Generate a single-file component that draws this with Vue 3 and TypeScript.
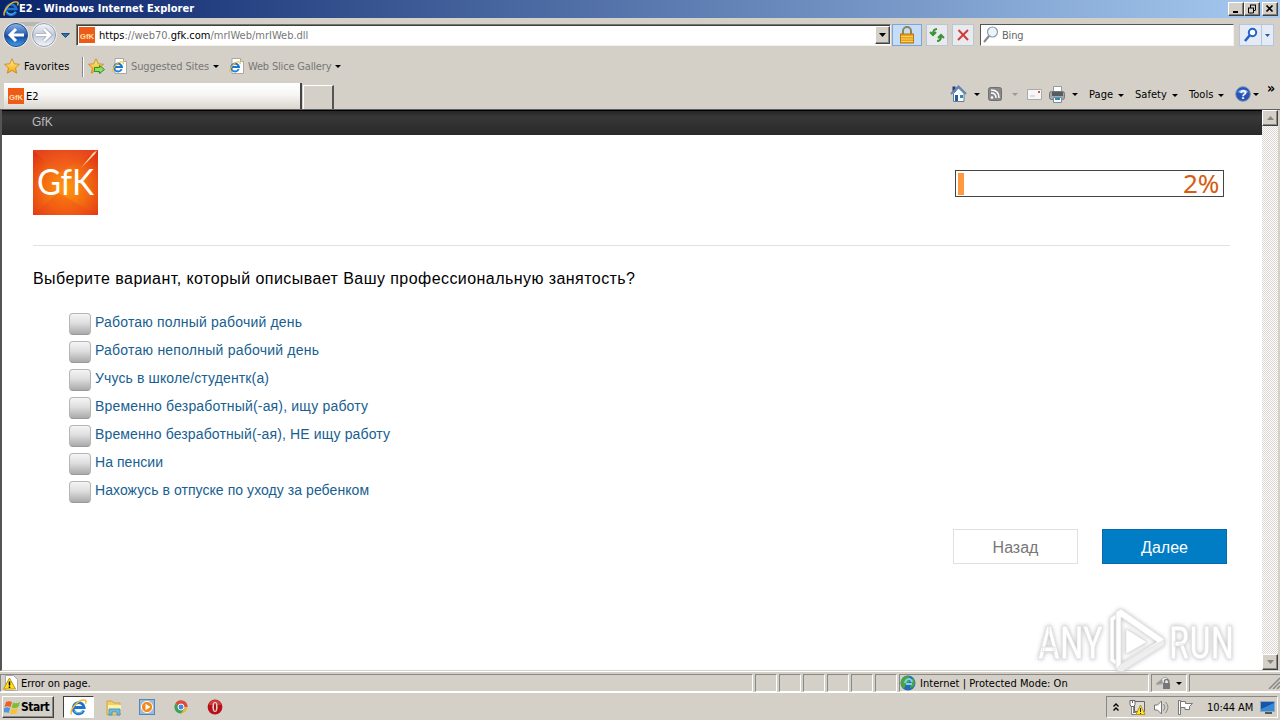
<script setup lang="ts">
const options: { label: string; width: number }[] = [
  { label: 'Работаю полный рабочий день', width: 207 },
  { label: 'Работаю неполный рабочий день', width: 224 },
  { label: 'Учусь в школе/студентк(а)', width: 174 },
  { label: 'Временно безработный(-ая), ищу работу', width: 273 },
  { label: 'Временно безработный(-ая), НЕ ищу работу', width: 295 },
  { label: 'На пенсии', width: 68 },
  { label: 'Нахожусь в отпуске по уходу за ребенком', width: 274 },
]
const menus: { label: string; width: number }[] = [
  { label: 'Page', width: 46 },
  { label: 'Safety', width: 54 },
  { label: 'Tools', width: 46 },
]
const progress = 2
</script>

<template>
  <div class="desktop">
    <svg class="defs" width="0" height="0">
      <defs>
        <radialGradient id="orange" cx=".5" cy=".58" r=".7">
          <stop offset="0" stop-color="#ff9a0c" /><stop offset=".5" stop-color="#f36a12" /><stop offset="1" stop-color="#df3215" />
        </radialGradient>
        <linearGradient id="blueBall" x1="0" y1="0" x2="0" y2="1">
          <stop offset="0" stop-color="#8db6e8" /><stop offset=".45" stop-color="#2f66b8" /><stop offset=".55" stop-color="#174a9c" /><stop offset="1" stop-color="#3fa0ee" />
        </linearGradient>
        <linearGradient id="greyBall" x1="0" y1="0" x2="0" y2="1">
          <stop offset="0" stop-color="#f5f7fb" /><stop offset=".5" stop-color="#c3cad9" /><stop offset="1" stop-color="#f3f6fb" />
        </linearGradient>
        <linearGradient id="gold" x1="0" y1="0" x2="0" y2="1">
          <stop offset="0" stop-color="#fff38a" /><stop offset="1" stop-color="#f3a516" />
        </linearGradient>
        <symbol id="ie" viewBox="0 0 16 16">
          <path d="M12.9 10.8A5.2 5.2 0 1 1 13.3 8H4.2" fill="none" stroke="#1d74cf" stroke-width="2.6" />
          <path d="M12.2 10.8A4.8 4.8 0 0 1 4 11" fill="none" stroke="#65bdf3" stroke-width="1" />
          <path d="M1.5 14.5C-.8 11 8-1 14.5 1.2c1 .5.7 2-.1 3.2" fill="none" stroke="#f0bd27" stroke-width="1.4" />
        </symbol>
        <symbol id="page-ie" viewBox="0 0 16 16">
          <path d="M3 .5h8.500l3 3v12H3z" fill="#fff" stroke="#aaa9a4" />
          <path d="M11.500.5v3h3" fill="#ddd" stroke="#aaa9a4" />
          <use href="#ie" x="0" y="3" width="12" height="12" />
        </symbol>
        <symbol id="star" viewBox="0 0 16 16">
          <path d="M8 .8l2.200 5 5.300.5-4 3.600 1.200 5.300L8 12.400l-4.700 2.800 1.200-5.300-4-3.600 5.300-.5z" fill="url(#gold)" stroke="#cf8a1d" stroke-width=".9" />
        </symbol>
      </defs>
    </svg>

    <header class="title-bar">
      <svg class="title-icon" width="16" height="16"><use href="#ie" width="16" height="16" /></svg>
      <span class="title">E2 - Windows Internet Explorer</span>
      <div class="window-buttons">
        <i class="win"><svg width="12" height="10"><path d="M3 8h5" stroke="#000" stroke-width="2" /></svg></i>
        <i class="win"><svg width="12" height="10"><path d="M4 1h6M4.500 1v3M9.500 1v5M9.500 6.500H8M2 4h6M2.500 4v5h5V4" fill="none" stroke="#000" /></svg></i>
        <i class="win close"><svg width="12" height="10"><path d="M2.500 1.500l6 6M8.500 1.500l-6 6" stroke="#000" stroke-width="1.700" /></svg></i>
      </div>
    </header>

    <section class="address-row">
      <svg class="nav" width="72" height="32">
        <path d="M15 3h28a14 14 0 0 1 10 4H6A14 14 0 0 1 15 3z" fill="#a7a7aa" opacity=".6" />
        <circle cx="15" cy="16" r="12.800" fill="#ececef" /><circle cx="15" cy="16" r="11.500" fill="url(#blueBall)" stroke="#284b83" />
        <circle cx="43" cy="16" r="12.800" fill="#eee" /><circle cx="43" cy="16" r="11.500" fill="url(#greyBall)" stroke="#969eb0" />
        <path d="M23 16H10M15 10l-6 6 6 6" fill="none" stroke="#fff" stroke-width="3" />
        <path d="M35 16h13M43 10l6 6-6 6" fill="none" stroke="#9aa2b4" stroke-width="4" />
        <path d="M35 16h13M43 10l6 6-6 6" fill="none" stroke="#fff" stroke-width="2.600" />
        <path d="M60.500 14.500h8l-4 4z" fill="#2878a5" stroke="#1d4e88" />
      </svg>
      <div class="address">
        <svg class="favicon" width="16" height="16"><rect width="16" height="16" fill="#ee5b18" /><text x="1" y="11.500" textLength="14" lengthAdjust="spacingAndGlyphs" class="tiny-logo">GfK</text></svg>
        <span class="url"><b>https</b>://web70.<b>gfk.com</b>/mrIWeb/mrIWeb.dll</span>
        <i class="drop"><svg width="7" height="4"><path d="M0 0h7L3.500 4z" /></svg></i>
      </div>
      <div class="tool lock"><svg width="18" height="20"><path d="M5 10V6a4 4 0 0 1 8 0v4" fill="none" stroke="#8d8458" stroke-width="2" /><rect x="2.500" y="9" width="13" height="9" fill="#e8a21b" stroke="#b67914" /><path d="M3 11.500h12M3 14h12M3 16.500h12" stroke="#ffd05a" /></svg></div>
      <div class="tool refresh"><svg width="16" height="16" fill="none" stroke="#399334" stroke-width="2"><path d="M8 2C5 2 4 4 4 7M1 5l3 3 3-3M8 14c3 0 4-2 4-5M9 11l3-3 3 3" /></svg></div>
      <div class="tool stop"><svg width="16" height="16"><path d="M3.500 3l9.500 10M13 3L3 13" stroke="#cf3e38" stroke-width="2" /></svg></div>
      <div class="search"><svg width="18" height="18"><circle cx="10.500" cy="6" r="5" fill="#eaf4fa" stroke="#8c9ba7" stroke-width="1.200" /><path d="M7 10l-5 6" stroke="#888" stroke-width="2" /></svg><span class="hint">Bing</span></div>
      <div class="go"><i><svg width="16" height="16"><circle cx="9.500" cy="5.500" r="3.700" fill="#fff" stroke="#2162c9" stroke-width="2" /><path d="M7 8l-5 6" stroke="#2162c9" stroke-width="2.600" /></svg></i><i class="go-drop"><svg width="5" height="3"><path d="M0 0h5L2.500 3z" fill="#235a9c" /></svg></i></div>
    </section>

    <section class="favorites">
      <svg width="17" height="17"><use href="#star" width="16" height="16" /></svg>
      <span class="fav-label">Favorites</span>
      <i class="divider"></i>
      <svg class="add-star" width="17" height="17"><use href="#star" width="16" height="16" /><path d="M6.500 9.500h5v-2l5 4-5 4v-2h-5z" fill="#8ee061" stroke="#2e912a" /></svg>
      <svg class="page-icon" width="16" height="17"><use href="#page-ie" width="16" height="16" /></svg>
      <span class="muted suggested">Suggested Sites</span><i class="arrow"></i>
      <svg class="page-icon second" width="16" height="17"><use href="#page-ie" width="16" height="16" /></svg>
      <span class="muted slices">Web Slice Gallery</span><i class="arrow"></i>
    </section>

    <section class="tab-row">
      <div class="tab"><svg class="favicon" width="16" height="16"><rect width="16" height="16" fill="#ee5b18" /><text x="1" y="11.500" textLength="14" lengthAdjust="spacingAndGlyphs" class="tiny-logo">GfK</text></svg><span>E2</span></div>
      <div class="new-tab"></div>
      <div class="commands">
        <svg class="home" width="18" height="18"><path d="M3.500 8.500v8h10.500v-8L8.500 3z" fill="#f5fbff" stroke="#637f9b" /><path d="M2.500 1.500h3v5h-3z" fill="#2b3480" /><path d="M1 9l7.500-7.500L16 9" fill="none" stroke="#6284ae" stroke-width="2" /><path d="M5 10h3v6H5z" fill="#2c5c96" /><path d="M10 10h3v3h-3z" fill="#3d86a6" /></svg>
        <i class="arrow home-arrow"></i>
        <svg class="rss" width="14" height="14"><rect x=".5" y=".5" width="13" height="13" rx="2" fill="#888" stroke="#707070" /><circle cx="4" cy="10.500" r="1.300" fill="#fff" /><path d="M3 6c3 0 5 2 5 5M3 3c5 0 8 3 8 8" fill="none" stroke="#fff" stroke-width="1.500" /></svg>
        <i class="arrow disabled"></i>
        <svg class="mail" width="15" height="11"><path d="M.5.5h14v10H.5z" fill="#f7f7f6" stroke="#aaa" /><path d="M3 7h5" stroke="#c1c1d0" /><path d="M11 2h2v2h-2z" fill="#cc5265" /></svg>
        <svg class="printer" width="17" height="17"><path d="M4.500.5h8v6h-8z" fill="#fff" stroke="#9a9a9a" /><rect x=".5" y="5.500" width="15" height="8" rx="2" fill="#a4a8ac" stroke="#777" /><path d="M3 6h11v4H3z" fill="#565c61" /><path d="M4.500 11.500h8v5h-8z" fill="#f8fcff" stroke="#798b9d" /><path d="M6 13h5" stroke="#288ac5" stroke-width="2" /></svg>
        <i class="arrow print-arrow"></i>
        <span v-for="menu in menus" :key="menu.label" class="menu" :style="{ width: menu.width + 'px' }">{{ menu.label }}<i class="arrow"></i></span>
        <svg class="help" width="16" height="16"><circle cx="8" cy="8" r="7.300" fill="#2853b4" stroke="#7a91ba" /><path d="M2.500 6a6 4 0 0 1 11 0q-5 3-11 0" fill="#7ca4e3" /><text x="4.500" y="12.500" class="question">?</text></svg>
        <i class="arrow"></i>
        <span class="more">»</span>
      </div>
    </section>

    <main class="viewport">
      <div class="document">
        <div class="site-bar"><span>GfK</span></div>
        <div class="brand-row">
          <svg width="65" height="65" class="logo">
            <rect width="65" height="65" fill="url(#orange)" />
            <path d="M0 0l25 23L65 0z" fill="#ef5427" opacity=".4" /><path d="M0 65l25-22 40 22z" fill="#ef3619" opacity=".25" />
            <path d="M64 .5L62 4 48 18l12-15z" fill="#ffd9a8" />
            <text x="4" y="45" textLength="57" lengthAdjust="spacingAndGlyphs" class="brand">GfK</text>
          </svg>
          <div class="progress"><i :style="{ width: progress * 3 + 'px' }"></i><span>{{ progress }}%</span></div>
        </div>
        <h1><svg width="620" height="24"><text x="0" y="17" textLength="602">Выберите вариант, который описывает Вашу профессиональную занятость?</text></svg></h1>
        <ul>
          <li v-for="option in options" :key="option.label"><i class="box"></i><svg width="310" height="24"><text x="0" y="14" :textLength="option.width">{{ option.label }}</text></svg></li>
        </ul>
        <div class="actions"><button class="back">Назад</button><button class="next">Далее</button></div>
        <svg class="watermark" width="212" height="76">
          <g class="mark">
            <text x="5" y="53" textLength="65" lengthAdjust="spacingAndGlyphs">ANY</text>
            <text x="136" y="53" textLength="65" lengthAdjust="spacingAndGlyphs">RUN</text>
            <path d="M77 12l6-4v5l-2 1v39l2 1v5l-6-4z" />
            <path fill-rule="evenodd" d="M88 3l43 30v6L88 66l-5-3V6zM88 11v47l36-22z" />
            <path d="M93 23l21 13-21 12z" />
            <path d="M88 58l43-24v5L88 66l-5-3z" class="shade" />
          </g>
        </svg>
      </div>
      <aside class="scrollbar"><i class="scroll-button"><svg width="7" height="4"><path d="M0 4h7L3.500 0z" fill="#87847e" /></svg></i><i class="scroll-button"><svg width="7" height="4"><path d="M0 0h7L3.500 4z" fill="#87847e" /></svg></i></aside>
    </main>

    <section class="status">
      <div class="cell error"><svg width="16" height="16"><path d="M2.500.5h8l4 4v11h-12z" fill="#fff" stroke="#aaa" /><path d="M6.500 3l6 11h-12z" fill="#ffe019" stroke="#b99015" /><path d="M6.500 6.500v4M6.500 11.500v1.500" stroke="#000" stroke-width="1.500" /></svg><span>Error on page.</span></div>
      <div v-for="n in 6" :key="n" class="cell mini"></div>
      <div class="cell zone"><svg width="16" height="16"><circle cx="8" cy="8" r="7.500" fill="#246cb7" /><path d="M2 4c2-4 7-4 8-2L8 4l2 3-4 2-2 5C0 11 0 6 2 4zM12 3c3 1 4 6 1 9l-3 1 1-5z" fill="#48a83e" /><path d="M5 8c1-5 6-5 7-1M6 9h6" stroke="#83cdf8" fill="none" stroke-width="2" /></svg><span>Internet | Protected Mode: On</span></div>
      <div class="cell security"><svg width="18" height="16"><path d="M1 9l7-6 3-1 4 4-3 5-4-3-4 2z" fill="#eee" stroke="#aaa" /><path d="M1 9l6-5 1 4-3 1z" fill="#999" /><rect x="8" y="8" width="7" height="6" fill="#777" /><path d="M9.500 8V6.500a2 2 0 0 1 4 0V8" fill="none" stroke="#777" stroke-width="1.300" /></svg><i class="arrow"></i></div>
      <div class="cell grip"><svg width="12" height="12"><path d="M1 12L12 1M5 12l7-7M9 12l3-3" stroke="#888" stroke-width="1.500" /></svg></div>
    </section>

    <footer class="taskbar">
      <div class="start"><svg width="17" height="17"><path d="M2 3c2-1 4-1 6 0L6.500 8c-2-1-4-1-6 0z" fill="#f05d24" /><path d="M9 3.500c2 1 4 1 7-.5L14.500 8c-3 1.500-5 1.500-7 .5z" fill="#80bf35" /><path d="M.2 9c2-1 4-1 6 0l-1.500 5c-2-1-4-1-6 0z" fill="#4b96df" /><path d="M7.200 9.500c2 1 4 1 7-.5l-1.500 5c-3 1.500-5 1.500-7 .5z" fill="#f8c13b" /></svg><b>Start</b></div>
      <div class="task-active"><svg width="17" height="17"><use href="#ie" width="17" height="17" /></svg></div>
      <svg class="explorer" width="17" height="17"><path d="M1 2h5l2 2h6v12H1z" fill="#f2cf69" stroke="#cda83e" /><path d="M2 6h13v8H2z" fill="#fff1a8" /><path d="M3 10h11v6h-3v-3H6v3H3z" fill="#70b8dd" stroke="#4f96ba" /></svg>
      <svg class="player" width="17" height="17"><rect x=".5" y=".5" width="15" height="15" fill="#9abbe0" stroke="#5685b9" /><circle cx="8" cy="8" r="5.600" fill="#f68816" stroke="#fff" /><path d="M6.500 4.800l5 3.200-5 3.200z" fill="#fff" /></svg>
      <svg class="chrome" width="14" height="14"><circle cx="7" cy="7" r="6.500" fill="#e5b945" /><path d="M7 7H13.500A6.500 6.500 0 0 0 1.200 4z" fill="#de4940" /><path d="M7 7L1.200 4A6.500 6.500 0 0 0 7 13.500L10 9z" fill="#37a35e" /><circle cx="7" cy="7" r="3" fill="#438add" stroke="#fff" /></svg>
      <svg class="opera" width="16" height="16"><circle cx="8" cy="8" r="7.400" fill="#b91018" /><path d="M2 6a6 5 0 0 1 12 0" fill="#e36b62" opacity=".5" /><ellipse cx="8" cy="8" rx="2.600" ry="5" fill="#e9d3cf" /><ellipse cx="8" cy="8" rx="1" ry="4" fill="#a80c13" /></svg>
      <div class="tray">
        <svg class="chevrons" width="6" height="9"><path d="M.5 3.500L3 1l2.500 2.500M.5 7.500L3 5l2.500 2.500" fill="none" stroke="#000" stroke-width="1.400" /></svg>
        <svg class="network" width="17" height="17"><path d="M5.500 2.500h10v10h-10z" fill="#ddd" stroke="#666" /><path d="M3.500 7v7.500h4" fill="none" stroke="#666" stroke-width="2.400" /><path d="M3.500 7v7.500h4" fill="none" stroke="#fff" /><path d="M1 1.500h5v4l-1 2H2l-1-2z" fill="#fff" stroke="#666" /><path d="M3.500 1v3" stroke="#666" /><path d="M11.500 6l4.500 9.500H7z" fill="#ffe42a" stroke="#b99611" /><path d="M11.500 9v4M11.500 14v1" stroke="#222" /></svg>
        <svg class="volume" width="17" height="17"><path d="M1.500 6h3l4-4v13l-4-4h-3z" fill="#fff" stroke="#777" /><path d="M10.500 5q3 3 0 7M12.500 3q5 5 0 11" fill="none" stroke="#888" /></svg>
        <svg class="flag" width="17" height="17"><path d="M1.500 1.500h2v14h-2z" fill="#fff" stroke="#777" /><path d="M3.500 2.500h5v2h7l-3 3 0 3H8v-2H3.500z" fill="#fff" stroke="#777" /></svg>
        <span>10:44 AM</span>
        <svg class="screen" width="16" height="13"><path d="M.5.5h14v10H.5z" fill="#1853a7" stroke="#93a7bb" /><path d="M1 8L14 2v8H1z" fill="#328ad8" /><path d="M5 12h7" stroke="#555" stroke-width="2" /></svg>
      </div>
    </footer>
  </div>
</template>

<style>
body { margin: 0; overflow: hidden; }
</style>
<style scoped>
* { box-sizing: border-box; }
i { font-style: normal; }
svg { display: block; flex: none; }
.desktop { width: 1280px; height: 720px; overflow: hidden; background: #d4d0c8; display: flex; flex-direction: column; font: 11px/14px "DejaVu Sans", sans-serif; font-stretch: condensed; color: #000; white-space: nowrap; }
.defs { position: absolute; }
.title-bar { height: 18px; flex: none; display: flex; align-items: center; padding: 0 2px 0 3px; background: linear-gradient(90deg, #0a246a, #a6caf0); color: #fff; }
.title { font-weight: bold; font-size: 11px; letter-spacing: .03px; }
.window-buttons { display: flex; margin-left: auto; }
.win { width: 16px; height: 14px; background: #d4d0c8; border: 1px solid; border-color: #fff #404040 #404040 #fff; box-shadow: inset -1px -1px #808080; overflow: hidden; padding: 1px; }
.close { margin-left: 2px; }
.address-row { height: 34px; flex: none; display: flex; align-items: center; padding-left: 1px; }
.nav { margin-right: 3px; }
.address { width: 815px; height: 22px; border: 1px solid; border-color: #77746f #f3f1ed #f3f1ed #77746f; box-shadow: inset 1px 1px #404040; background: #fff; display: flex; align-items: center; padding-left: 2px; }
.tiny-logo { font: bold 8px "Liberation Sans", sans-serif; fill: #ffe0aa; }
.url { margin-left: 4px; padding-top: 1px; color: #777; }
.url b { font-weight: normal; color: #000; }
.drop { width: 15px; height: 18px; margin-left: auto; background: #d4d0c8; border: 1px solid; border-color: #fff #404040 #404040 #fff; box-shadow: inset -1px -1px #888; display: grid; place-items: center; }
.tool { height: 22px; display: grid; place-items: center; border: 1px solid #b9c6d3; background: #e9eaed; }
.lock { width: 30px; margin-left: 1px; background: #c7dcf7; border-color: #7ba6dc; }
.refresh { width: 22px; margin-left: 4px; }
.stop { width: 22px; margin-left: 4px; }
.search { width: 254px; height: 22px; margin-left: 6px; background: #fff; border: 1px solid; border-color: #555 #f4f2ee #f4f2ee #555; display: flex; align-items: center; padding-left: 1px; }
.hint { color: #666; margin-left: 2px; padding-top: 2px; letter-spacing: -.2px; }
.go { display: flex; width: 35px; height: 22px; margin-left: 5px; border: 1px solid #b6c5dc; background: #e5ebf5; }
.go i { width: 21px; display: grid; place-items: center; }
.go .go-drop { width: 12px; border-left: 1px solid #b6c5dc; }
.favorites { height: 29px; flex: none; display: flex; align-items: center; padding-left: 4px; }
.fav-label { width: 55px; margin-left: 3px; letter-spacing: .1px; }
.divider { width: 2px; height: 20px; margin-left: 3px; border-left: 1px solid #888; border-right: 1px solid #fff; }
.add-star { margin-left: 4px; }
.page-icon { margin-left: 7px; }
.muted { color: #777; margin-left: 3px; padding-top: 1px; }
.suggested { width: 82px; letter-spacing: -.13px; }
.slices { width: 87px; margin-left: 3px; letter-spacing: -.18px; }
.arrow { display: inline-block; width: 0; height: 0; border: 3px solid transparent; border-top-color: #000; border-bottom: 0; flex: none; }
.second { margin-left: 10px; }
.tab-row { height: 28px; flex: none; display: flex; align-items: flex-end; padding-left: 4px; }
.tab { width: 298px; height: 26px; background: linear-gradient(#fff, #f7f6f4 45%, #d9d5ce); border-right: 2px solid #444; display: flex; align-items: center; padding-left: 4px; }
.tab span { margin-left: 2px; padding-top: 1px; }
.new-tab { width: 31px; height: 24px; border: solid #fff; border-width: 1px 0 0 1px; border-right: 2px solid #555; margin-left: 1px; }
.commands { display: flex; align-items: center; height: 28px; margin-left: 616px; padding-bottom: 2px; }
.home-arrow { margin-left: 6px; }
.rss { margin-left: 8px; }
.disabled { margin-left: 10px; border-top-color: #999; }
.mail { margin-left: 9px; }
.printer { margin-left: 7px; }
.print-arrow { margin: 0 11px 0 6px; }
.menu { display: flex; align-items: center; justify-content: space-between; padding-top: 2px; letter-spacing: .05px; }
.menu .arrow { margin-right: 11px; }
.help + .arrow { margin-left: 2px; }
.question { font: bold 12px "Liberation Sans", sans-serif; fill: #fff; }
.more { font-size: 14px; font-weight: bold; margin: -13px 0 0 8px; }
.viewport { height: 562px; flex: none; display: flex; border-left: 2px solid #555; border-top: 1px solid #606060; border-bottom: 1px solid #d4d0c8; }
.document { width: 1260px; position: relative; background: #fff; font-family: "Liberation Sans", sans-serif; font-stretch: normal; }
.site-bar { height: 25px; background: linear-gradient(#262626, #373737 25%, #292929); border-top: 1px solid #000; color: #bbb; font-size: 12px; line-height: 22px; padding-left: 30px; }
.brand-row { height: 111px; margin: 0 32px 0 31px; border-bottom: 1px solid #e1e1e1; display: flex; justify-content: space-between; padding: 15px 6px 0 0; }
.brand { font: 36px Lato, sans-serif; fill: #fff; }
.progress { width: 269px; height: 27px; margin-top: 20px; border: 1px solid #444; display: flex; align-items: center; padding: 2px 4px 2px 2px; }
.progress i { height: 22px; background: #ff9940; }
.progress span { margin: -2px 0 0 auto; color: #d85b10; font: 26px/24px "Noto Sans", sans-serif; letter-spacing: -.3px; }
h1 { height: 24px; margin: 21px 0 0 31px; font: 16px "Liberation Sans", sans-serif; }
ul { list-style: none; margin: 22px 0 0 67px; padding: 0; }
li { height: 28px; display: flex; font-size: 14px; }
li text { fill: #17608f; }
.box { width: 22px; height: 22px; margin: 0 4px 0 0; border: 1px solid #b5b5b5; border-bottom-color: #999; border-radius: 4px; background: linear-gradient(#f5f5f5, #dedede 45%, #aaa); }
.actions { display: flex; gap: 24px; margin: 20px 0 0 951px; }
button { width: 125px; height: 35px; padding: 2px 0 0; border: 1px solid #e0e0e0; border-radius: 0; background: #fff; color: #777; font: 16px "Liberation Sans", sans-serif; }
.next { border-color: #0869ad; background: #007dc5; color: #fff; }
.watermark { position: absolute; left: 1031px; top: 496px; overflow: visible; }
.mark { fill: #fff; stroke: #e2e2e2; stroke-width: .8; filter: drop-shadow(0 0 2px #bbb); }
.mark text { font: 47px Roboto, sans-serif; font-weight: 500; }
.mark .shade { fill: #eee; }
.scrollbar { width: 16px; background: repeating-conic-gradient(#fff 0 25%, #d9d5d0 0 50%) 0 0 / 2px 2px; display: flex; flex-direction: column; justify-content: space-between; }
.scroll-button { width: 16px; height: 16px; background: #d4d0c8; border: 1px solid; border-color: #fff #404040 #404040 #fff; box-shadow: inset -1px -1px #888; display: grid; place-items: center; }
.status { height: 22px; flex: none; border-top: 1px solid #fff; border-bottom: 1px solid #fff; display: flex; padding-top: 2px; }
.cell { height: 18px; margin-right: 2px; border: 1px solid; border-color: #888 #fff #fff #888; display: flex; align-items: center; }
.error { width: 753px; padding-left: 2px; }
.error span { margin-left: 2px; padding-top: 1px; letter-spacing: -.07px; }
.mini { width: 22px; }
.zone { width: 250px; }
.zone span { margin-left: 4px; padding-top: 1px; letter-spacing: .03px; }
.security { width: 36px; padding-left: 3px; }
.security .arrow { margin-left: 3px; }
.grip { flex: 1; margin: 0; justify-content: flex-end; border-right: 0; }
.taskbar { height: 27px; flex: none; display: flex; align-items: center; padding: 2px 2px 1px; }
.start { width: 52px; height: 22px; display: flex; align-items: center; border: 1px solid; border-color: #fff #404040 #404040 #fff; box-shadow: inset -1px -1px #888; padding-left: 1px; }
.start b { font-size: 12px; letter-spacing: -.5px; }
.task-active { width: 31px; height: 22px; margin-left: 9px; background: #fff; border: 1px solid; border-color: #404040 #fff #fff #404040; display: grid; place-items: center; }
.explorer { margin-left: 12px; }
.player { margin-left: 16px; }
.chrome { margin-left: 18px; }
.opera { margin-left: 19px; }
.tray { width: 172px; height: 22px; margin-left: auto; border: 1px solid; border-color: #888 #fff #fff #888; display: flex; align-items: center; }
.chevrons { margin-left: 6px; }
.network { margin-left: 10px; }
.volume { margin-left: 7px; }
.flag { margin-left: 7px; }
.tray span { width: 48px; margin-left: 13px; padding-top: 1px; letter-spacing: -.1px; }
.screen { margin-left: 5px; }
</style>
